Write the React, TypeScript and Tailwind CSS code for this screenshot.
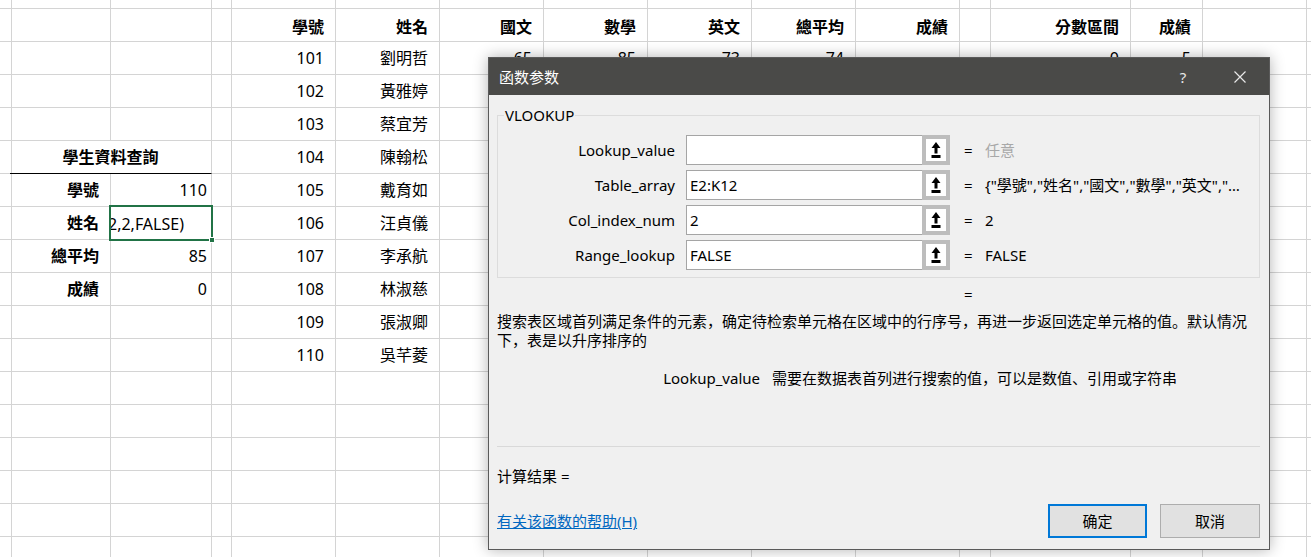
import React from "react";

const names = ["劉明哲", "黃雅婷", "蔡宜芳", "陳翰松", "戴育如", "汪貞儀", "李承航", "林淑慈", "張淑卿", "吳芊菱"];

function buildData(): string[][] {
  const rows: string[][] = [];
  for (let r = 0; r < 18; r++) rows.push(new Array(16).fill(""));
  const h = ["", "", "", "", "學號", "姓名", "國文", "數學", "英文", "總平均", "成績", "", "分數區間", "成績", "", ""];
  rows[1] = h;
  for (let i = 0; i < 10; i++) {
    rows[2 + i][4] = String(101 + i);
    rows[2 + i][5] = names[i];
  }
  rows[2][6] = "65";
  rows[2][7] = "85";
  rows[2][8] = "73";
  rows[2][9] = "74";
  rows[2][12] = "0";
  rows[2][13] = "5";
  rows[6][1] = "學號";
  rows[6][2] = "110";
  rows[7][1] = "姓名";
  rows[8][1] = "總平均";
  rows[8][2] = "85";
  rows[9][1] = "成績";
  rows[9][2] = "0";
  return rows;
}

function RefButton() {
  return (
    <div className="w-[28px] h-[30px] border-[4px] border-[#bdbdbd] bg-white flex items-center justify-center shrink-0">
      <svg width="18" height="21" viewBox="0 0 18 21">
        <polygon points="9,2 4.5,8 7.5,8 7.5,13.5 10.5,13.5 10.5,8 13.5,8" fill="#000" />
        <rect x="4.5" y="15" width="9" height="3" fill="#000" />
      </svg>
    </div>
  );
}

function ArgRow({ label, value, result, gray }: { label: string; value: string; result: string; gray?: boolean }) {
  return (
    <div className="flex items-center h-[30px]">
      <div className="w-[177px] text-right leading-[19px]">{label}</div>
      <div className="ml-[11px] w-[264px] h-[30px] flex shrink-0">
        <div className="flex-1 h-full bg-white border-y border-l border-[#a5a5a5] flex items-center pl-[3px] leading-[19px]">
          {value}
        </div>
        <RefButton />
      </div>
      <div className="w-[35px] pl-[14px] leading-[19px] shrink-0">=</div>
      <div className={gray ? "text-[#a8a8a8] whitespace-nowrap leading-[19px]" : "text-black whitespace-nowrap leading-[19px]"}>
        {result}
      </div>
    </div>
  );
}

export default function App() {
  const data = buildData();
  const cells: React.ReactNode[] = [];
  for (let r = 0; r < 18; r++) {
    for (let c = 0; c < 16; c++) {
      const key = r + "-" + c;
      if (r === 5 && c === 2) continue;
      if (r === 5 && c === 1) {
        cells.push(
          <div
            key={key}
            className="col-span-2 border-r border-b border-r-[#d4d4d4] border-b-black flex items-center justify-center font-bold whitespace-nowrap"
          >
            學生資料查詢
          </div>
        );
        continue;
      }
      if (r === 7 && c === 2) {
        cells.push(
          <div key={key} className="relative border-r border-b border-r-[#d4d4d4] border-b-[#d4d4d4]">
            <div className="w-full h-full overflow-hidden whitespace-nowrap flex items-end pb-[5px]">
              <span className="ml-[-3px]">2,2,FALSE)</span>
            </div>
            <div className="absolute left-[-2px] top-[-2px] w-[104px] h-[36px] border-2 border-[#217346] z-10">
              <div className="absolute right-[-4px] bottom-[-4px] w-[6px] h-[6px] bg-[#217346] border border-white"></div>
            </div>
          </div>
        );
        continue;
      }
      const text = data[r][c];
      const bold = r === 1 || (c === 1 && r >= 5 && r <= 9);
      const base = "border-r border-b border-r-[#d4d4d4] border-b-[#d4d4d4] overflow-hidden whitespace-nowrap flex justify-end";
      const valign = r === 1 ? " items-end pb-[4px]" : " items-center";
      const pad = c === 2 ? " pr-[4px]" : " pr-[11px]";
      const weight = bold ? " font-bold" : "";
      cells.push(
        <div key={key} className={base + valign + pad + weight}>
          {text}
        </div>
      );
    }
  }

  return (
    <div className="relative w-[1311px] h-[557px] overflow-hidden bg-white text-black">
      <div className="grid grid-cols-[10px_101px_101px_20px_104px_104px_104px_104px_104px_104px_104px_31px_140px_72px_104px_5px] grid-rows-[9px_repeat(17,33px)] font-['Noto_Sans','Noto_Sans_CJK_TC',sans-serif] text-[16px] leading-[20px] text-black">
        {cells}
      </div>

      <div className="absolute left-[488px] top-[57px] w-[782px] h-[493px] border border-[#5a5a5a] bg-[#f0f0f0] flex flex-col shadow-[0_0_14px_rgba(0,0,0,0.3)] font-['Noto_Sans','Noto_Sans_CJK_SC',sans-serif] text-[15px] text-black">
        <div className="h-[37px] bg-[#4a4a48] flex items-center pl-[10px] text-white shrink-0">
          <span className="leading-[20px]">函数参数</span>
          <span className="ml-auto w-[20px] text-center text-[#e8e8e8] leading-[20px]">?</span>
          <span className="ml-[41px] mr-[23px] w-[12px] h-[12px] flex">
            <svg width="12" height="12" viewBox="0 0 12 12">
              <path d="M0.5 0.5 L11.5 11.5 M11.5 0.5 L0.5 11.5" stroke="#e8e8e8" strokeWidth="1.2" fill="none" />
            </svg>
          </span>
        </div>

        <div className="flex-1 flex flex-col pl-[8px] pr-[9px]">
          <div className="relative mt-[20px] border border-[#dcdcdc] pt-[19px] pb-[7px]">
            <div className="absolute left-[6px] top-[-11px] px-[1px] bg-[#f0f0f0] leading-[20px]">VLOOKUP</div>
            <div className="flex flex-col gap-[5px]">
              <ArgRow label="Lookup_value" value="" result="任意" gray />
              <ArgRow label="Table_array" value="E2:K12" result={'{"學號","姓名","國文","數學","英文","…'} />
              <ArgRow label="Col_index_num" value="2" result="2" />
              <ArgRow label="Range_lookup" value="FALSE" result="FALSE" />
            </div>
          </div>

          <div className="mt-[7px] pl-[467px] leading-[19px]">=</div>

          <div className="mt-[8px] leading-[19px] whitespace-nowrap">
            <div>搜索表区域首列满足条件的元素，确定待检索单元格在区域中的行序号，再进一步返回选定单元格的值。默认情况</div>
            <div>下，表是以升序排序的</div>
          </div>

          <div className="mt-[19px] flex leading-[19px] whitespace-nowrap">
            <span className="w-[263px] text-right">Lookup_value</span>
            <span className="ml-[12px]">需要在数据表首列进行搜索的值，可以是数值、引用或字符串</span>
          </div>

          <div className="mt-[58px] border-t border-[#d9d9d9]"></div>

          <div className="mt-[20px] leading-[19px]">计算结果 =</div>

          <div className="mt-[18px] flex items-start">
            <span className="mt-[8px] leading-[19px] text-[#0067c0] underline">有关该函数的帮助(H)</span>
            <div className="ml-auto flex">
              <div className="w-[99px] h-[34px] border-2 border-[#0078d7] bg-[#e1e1e1] flex items-center justify-center leading-[19px]">
                确定
              </div>
              <div className="ml-[13px] w-[100px] h-[34px] border border-[#adadad] bg-[#e1e1e1] flex items-center justify-center leading-[19px]">
                取消
              </div>
            </div>
          </div>
        </div>
      </div>
    </div>
  );
}
